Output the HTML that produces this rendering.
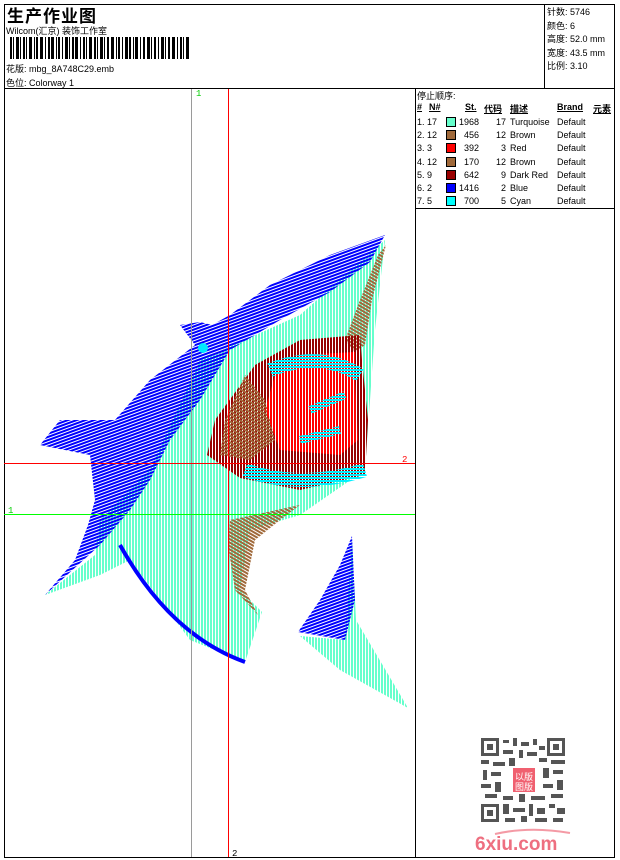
<!DOCTYPE html>
<html><head><meta charset="utf-8"><style>
html,body{margin:0;padding:0;background:#fff;width:620px;height:860px;overflow:hidden}
body{position:relative;font-family:"Liberation Sans","WenQuanYi Zen Hei","Noto Sans CJK SC",sans-serif;color:#000;font-size:9px}
.a{position:absolute;white-space:nowrap}
.ln{position:absolute;background:#000}
</style></head><body>
<div class="ln" style="left:4px;top:4px;width:611px;height:1px"></div>
<div class="ln" style="left:4px;top:857px;width:611px;height:1px"></div>
<div class="ln" style="left:4px;top:4px;width:1px;height:854px"></div>
<div class="ln" style="left:614px;top:4px;width:1px;height:854px"></div>
<div class="ln" style="left:4px;top:88px;width:611px;height:1px"></div>
<div class="ln" style="left:544px;top:4px;width:1px;height:84px"></div>
<div class="ln" style="left:415px;top:88px;width:1px;height:770px"></div>
<div class="ln" style="left:415px;top:208px;width:200px;height:1px"></div>

<div class="a" style="left:7px;top:2px;font-size:17px;font-weight:bold;letter-spacing:1px">生产作业图</div>
<div class="a" style="left:6px;top:24px;font-size:9px">Wilcom(汇京) 装饰工作室</div>
<svg class="a" style="left:8px;top:37px" width="190" height="22">
<g fill="#000">
<rect x="2" y="0" width="2" height="22"/><rect x="5" y="0" width="1" height="22"/><rect x="8" y="0" width="3" height="22"/><rect x="12" y="0" width="1" height="22"/><rect x="15" y="0" width="2" height="22"/><rect x="18" y="0" width="1" height="22"/><rect x="21" y="0" width="3" height="22"/><rect x="26" y="0" width="1" height="22"/><rect x="28" y="0" width="2" height="22"/><rect x="32" y="0" width="3" height="22"/><rect x="37" y="0" width="1" height="22"/><rect x="40" y="0" width="2" height="22"/><rect x="43" y="0" width="3" height="22"/><rect x="48" y="0" width="1" height="22"/><rect x="50" y="0" width="2" height="22"/><rect x="54" y="0" width="1" height="22"/><rect x="57" y="0" width="3" height="22"/><rect x="61" y="0" width="1" height="22"/><rect x="64" y="0" width="2" height="22"/><rect x="67" y="0" width="3" height="22"/><rect x="72" y="0" width="1" height="22"/><rect x="75" y="0" width="2" height="22"/><rect x="78" y="0" width="1" height="22"/><rect x="81" y="0" width="3" height="22"/><rect x="86" y="0" width="2" height="22"/><rect x="89" y="0" width="1" height="22"/><rect x="92" y="0" width="3" height="22"/><rect x="96" y="0" width="1" height="22"/><rect x="99" y="0" width="2" height="22"/><rect x="103" y="0" width="3" height="22"/><rect x="108" y="0" width="1" height="22"/><rect x="110" y="0" width="2" height="22"/><rect x="114" y="0" width="1" height="22"/><rect x="117" y="0" width="3" height="22"/><rect x="121" y="0" width="2" height="22"/><rect x="125" y="0" width="1" height="22"/><rect x="127" y="0" width="3" height="22"/><rect x="132" y="0" width="1" height="22"/><rect x="135" y="0" width="2" height="22"/><rect x="139" y="0" width="3" height="22"/><rect x="143" y="0" width="1" height="22"/><rect x="146" y="0" width="2" height="22"/><rect x="150" y="0" width="1" height="22"/><rect x="153" y="0" width="3" height="22"/><rect x="157" y="0" width="1" height="22"/><rect x="160" y="0" width="2" height="22"/><rect x="164" y="0" width="3" height="22"/><rect x="169" y="0" width="1" height="22"/><rect x="172" y="0" width="2" height="22"/><rect x="175" y="0" width="1" height="22"/><rect x="178" y="0" width="3" height="22"/>
</g></svg>
<div class="a" style="left:6px;top:62px">花版: mbg_8A748C29.emb</div>
<div class="a" style="left:6px;top:76px">色位: Colorway 1</div>

<div class="a" style="left:547px;top:6px;line-height:13.5px">针数: 5746<br>颜色: 6<br>高度: 52.0 mm<br>宽度: 43.5 mm<br>比例: 3.10</div>

<div class="a" style="left:417px;top:89px">停止顺序:</div>
<div class="a" style="left:417px;top:102px;font-weight:bold;text-decoration:underline">#</div>
<div class="a" style="left:429px;top:102px;font-weight:bold;text-decoration:underline">N#</div>
<div class="a" style="left:465px;top:102px;font-weight:bold;text-decoration:underline">St.</div>
<div class="a" style="left:484px;top:102px;font-weight:bold;text-decoration:underline">代码</div>
<div class="a" style="left:510px;top:102px;font-weight:bold;text-decoration:underline">描述</div>
<div class="a" style="left:557px;top:102px;font-weight:bold;text-decoration:underline">Brand</div>
<div class="a" style="left:593px;top:102px;font-weight:bold;text-decoration:underline">元素</div>
<div class="a" style="left:417px;top:116px;line-height:13.2px">1. 17<br>2. 12<br>3. 3<br>4. 12<br>5. 9<br>6. 2<br>7. 5</div>
<div class="a" style="left:459px;top:116px;line-height:13.2px;text-align:right;width:20px">1968<br>456<br>392<br>170<br>642<br>1416<br>700</div>
<div class="a" style="left:490px;top:116px;line-height:13.2px;text-align:right;width:16px">17<br>12<br>3<br>12<br>9<br>2<br>5</div>
<div class="a" style="left:510px;top:116px;line-height:13.2px">Turquoise<br>Brown<br>Red<br>Brown<br>Dark Red<br>Blue<br>Cyan</div>
<div class="a" style="left:557px;top:116px;line-height:13.2px">Default<br>Default<br>Default<br>Default<br>Default<br>Default<br>Default</div>
<svg class="a" style="left:446px;top:116px" width="12" height="95">
<g stroke="#000" stroke-width="1">
<rect x="0.5" y="1.5" width="9" height="9" fill="#66ffcc"/>
<rect x="0.5" y="14.5" width="9" height="9" fill="#a0693a"/>
<rect x="0.5" y="27.5" width="9" height="9" fill="#ff0000"/>
<rect x="0.5" y="41.5" width="9" height="9" fill="#a0693a"/>
<rect x="0.5" y="54.5" width="9" height="9" fill="#990000"/>
<rect x="0.5" y="67.5" width="9" height="9" fill="#0000ff"/>
<rect x="0.5" y="80.5" width="9" height="9" fill="#00ffff"/>
</g></svg>

<svg class="a" style="left:0;top:0" width="415" height="858">
<defs>
<pattern id="pb" width="3" height="3" patternUnits="userSpaceOnUse" patternTransform="rotate(-20)"><rect width="3" height="2" fill="#0000ff"/></pattern>
<pattern id="pt" width="3" height="3" patternUnits="userSpaceOnUse"><rect width="2" height="3" fill="#66ffcc"/></pattern>
<pattern id="pr" width="3" height="3" patternUnits="userSpaceOnUse"><rect width="2" height="3" fill="#ff0000"/></pattern>
<pattern id="pd" width="3" height="3" patternUnits="userSpaceOnUse"><rect width="2" height="3" fill="#990000"/></pattern>
<pattern id="pw" width="3" height="3" patternUnits="userSpaceOnUse" patternTransform="rotate(30)"><rect width="3" height="2" fill="#a0693a"/></pattern>
<pattern id="pc" width="3" height="3" patternUnits="userSpaceOnUse"><rect width="3" height="2" fill="#00f0ff"/></pattern>
</defs>
<polygon fill="url(#pt)" points="45,595 95,555 100,520 150,470 200,360 300,315 385,240 375,330 365,470 300,515 250,530 240,590 262,612 245,662 190,640 130,560 100,575"/>
<polygon fill="url(#pt)" points="352,540 356,620 408,708 340,670 300,636 345,640"/>
<polygon fill="url(#pb)" points="385,235 330,255 270,285 230,315 212,325 200,322 180,325 195,345 150,380 115,420 60,420 40,445 90,455 95,500 88,525 75,560 45,595 100,545 130,510 150,480 170,440 200,400 230,350 280,320 330,292 370,262"/>
<path d="M120,545 Q170,635 245,662" stroke="#0000ff" stroke-width="4" fill="none"/>
<polygon fill="url(#pb)" points="352,536 340,565 320,600 298,632 345,640 355,600"/>
<polygon fill="url(#pw)" points="386,245 372,300 365,345 355,352 345,340 360,300 378,255"/>
<polygon fill="url(#pd)" points="360,335 300,340 255,365 215,420 207,455 240,478 300,490 365,475 368,420 362,360"/>
<polygon fill="url(#pw)" points="245,375 225,420 220,455 250,460 275,440 265,400"/>
<polygon fill="url(#pr)" points="355,352 300,355 275,375 265,410 280,450 340,455 358,440 355,380"/>
<path d="M270,370 Q320,350 360,375 M245,470 Q300,490 365,470" stroke="url(#pc)" stroke-width="14" fill="none"/>
<path d="M310,410 L345,395 M300,440 L340,430" stroke="url(#pc)" stroke-width="8" fill="none"/>
<polygon fill="url(#pw)" points="230,520 300,505 280,520 255,540 245,590 258,615 235,590 228,545"/>
<circle cx="203" cy="348" r="5" fill="#00e8ff"/>
<line x1="191.5" y1="89" x2="191.5" y2="857" stroke="#9a9a9a" stroke-width="1"/>
<line x1="228.5" y1="89" x2="228.5" y2="857" stroke="#ff0000" stroke-width="1"/>
<line x1="4" y1="463.5" x2="415" y2="463.5" stroke="#ff0000" stroke-width="1"/>
<line x1="4" y1="514.5" x2="415" y2="514.5" stroke="#00ff00" stroke-width="1"/>
<text x="196" y="96" fill="#00cc00" font-size="9" font-family="Liberation Mono">1</text>
<text x="8" y="513" fill="#00cc00" font-size="9" font-family="Liberation Mono">1</text>
<text x="402" y="462" fill="#ff0000" font-size="9" font-family="Liberation Mono">2</text>
<text x="232" y="856" fill="#000" font-size="9" font-family="Liberation Mono">2</text>
</svg>

<svg class="a" style="left:481px;top:738px" width="86" height="86">
<g fill="#555">
<rect x="0" y="0" width="18" height="18"/><rect x="66" y="0" width="18" height="18"/><rect x="0" y="66" width="18" height="18"/>
</g>
<g fill="#fff"><rect x="3" y="3" width="12" height="12"/><rect x="69" y="3" width="12" height="12"/><rect x="3" y="69" width="12" height="12"/></g>
<g fill="#555"><rect x="6" y="6" width="6" height="6"/><rect x="72" y="6" width="6" height="6"/><rect x="6" y="72" width="6" height="6"/>
<rect x="22" y="2" width="6" height="3"/><rect x="32" y="0" width="4" height="8"/><rect x="40" y="4" width="8" height="4"/><rect x="52" y="1" width="4" height="6"/><rect x="58" y="8" width="6" height="4"/>
<rect x="22" y="12" width="10" height="4"/><rect x="38" y="12" width="4" height="8"/><rect x="46" y="14" width="10" height="4"/>
<rect x="0" y="22" width="8" height="4"/><rect x="12" y="24" width="12" height="4"/><rect x="28" y="20" width="6" height="8"/><rect x="58" y="20" width="8" height="4"/><rect x="70" y="22" width="14" height="4"/>
<rect x="2" y="32" width="4" height="10"/><rect x="10" y="34" width="10" height="4"/><rect x="62" y="30" width="6" height="10"/><rect x="72" y="32" width="10" height="4"/>
<rect x="0" y="46" width="10" height="4"/><rect x="14" y="44" width="6" height="10"/><rect x="62" y="46" width="10" height="4"/><rect x="76" y="42" width="6" height="10"/>
<rect x="4" y="56" width="12" height="4"/><rect x="22" y="58" width="10" height="4"/><rect x="38" y="56" width="6" height="8"/><rect x="50" y="58" width="14" height="4"/><rect x="70" y="56" width="12" height="4"/>
<rect x="22" y="66" width="6" height="10"/><rect x="32" y="70" width="12" height="4"/><rect x="48" y="66" width="4" height="12"/><rect x="56" y="70" width="8" height="6"/><rect x="68" y="66" width="6" height="4"/><rect x="76" y="70" width="8" height="6"/>
<rect x="24" y="80" width="10" height="4"/><rect x="40" y="78" width="6" height="6"/><rect x="54" y="80" width="12" height="4"/><rect x="72" y="80" width="10" height="4"/>
</g>
<rect x="32" y="30" width="22" height="24" fill="#f06070"/>
<text x="34" y="42" fill="#fff" font-size="9" font-family="WenQuanYi Zen Hei">以版</text>
<text x="34" y="52" fill="#fff" font-size="9" font-family="WenQuanYi Zen Hei">图版</text>
</svg>
<svg class="a" style="left:470px;top:826px" width="110" height="28">
<path d="M25,8 Q60,0 100,7" stroke="#f49aa5" stroke-width="2" fill="none"/>
<text x="5" y="24" fill="#ee6f80" font-size="19" font-weight="bold" font-family="Liberation Sans">6xiu.com</text>
</svg>
</body></html>
